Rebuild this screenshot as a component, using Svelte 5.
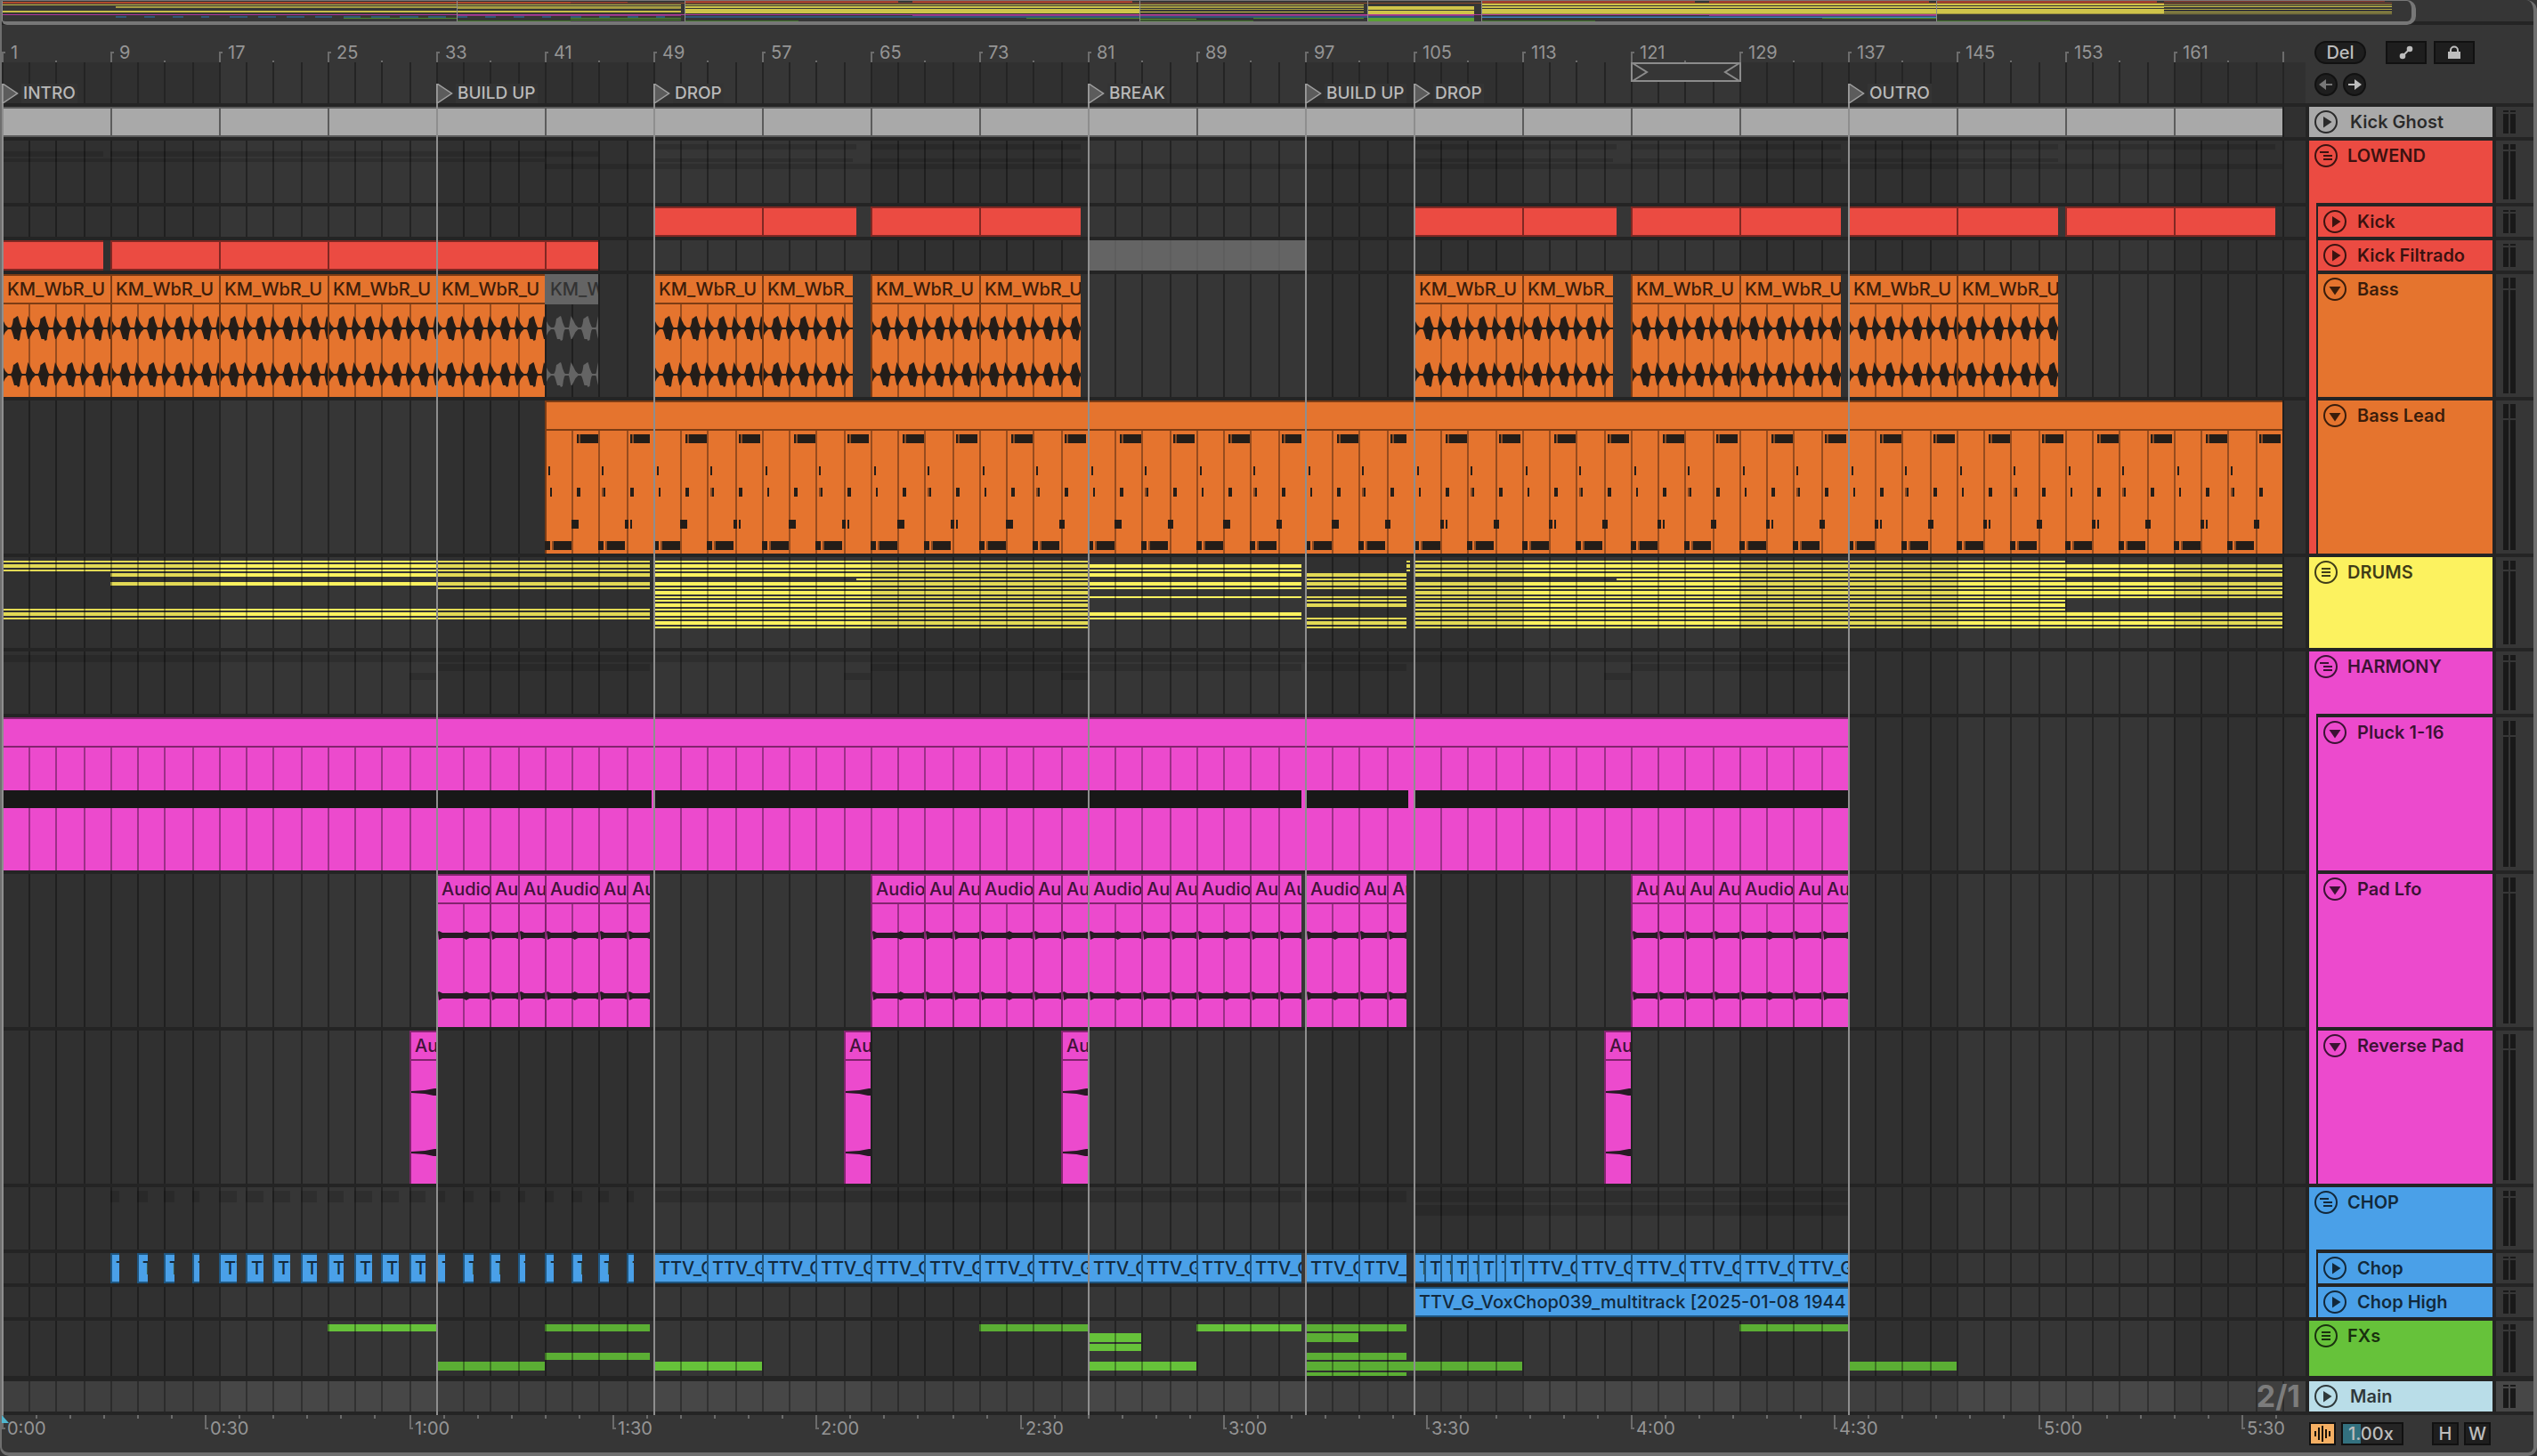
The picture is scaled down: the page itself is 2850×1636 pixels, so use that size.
<script>
  const BAR = 15.25;
  const LANE = 2588;
  const END = 169;

  let laneWidth = $state(LANE);
  let ppb = $derived((laneWidth * BAR) / LANE);

  // Bar position -> pixel, snapped to the two-pixel grid
  const X = (bar) => 2 * Math.floor((0.5 + (bar - 1) * ppb) / 2);
  const T = (sec) => X(1 + sec / 2);

  const range = (from, to, step) => {
    const out = [];
    for (let i = from; i < to; i += step) out.push(i);
    return out;
  };

  const locators = [
    { bar: 1, name: 'INTRO' },
    { bar: 33, name: 'BUILD UP' },
    { bar: 49, name: 'DROP' },
    { bar: 81, name: 'BREAK' },
    { bar: 97, name: 'BUILD UP' },
    { bar: 105, name: 'DROP' },
    { bar: 137, name: 'OUTRO' }
  ];

  const split = (...bars) => bars.slice(0, -1).map((b, i) => [b, bars[i + 1]]);

  const kick = [
    ...split(49, 57, 64), ...split(65, 73, 80.5), ...split(105, 113, 120), ...split(121, 129, 136.5),
    ...split(137, 145, 152.5), ...split(153, 161, 168.5)
  ];
  const filtrado = [[1, 8.5], ...split(9, 17, 25, 33, 41, 45)];
  const bass = [
    ...split(1, 9, 17, 25, 33, 41), ...split(49, 57, 63.75), ...split(65, 73, 80.5),
    ...split(105, 113, 119.75), ...split(121, 129, 136.5), ...split(137, 145, 152.5)
  ];
  const pad = [
    ...split(33, 37, 39, 41, 45, 47, 48.75),
    ...split(65, 69, 71, 73, 77, 79, 81, 85, 87, 89, 93, 95, 96.75),
    ...split(97, 101, 103, 104.5),
    ...split(121, 123, 125, 127, 129, 133, 135, 137)
  ];
  const reverse = [[31, 33], [63, 65], [79, 81], [119, 121]];
  const chopShort = [
    [9, 0.75], [11, 0.75], [13, 0.75], [15, 0.6], [17, 1.3], [19, 1.3], [21, 1.3], [23, 1.2],
    [25, 1.2], [27, 1.3], [29, 1.3], [31, 1.2], [33, 0.75], [35, 0.75], [37, 0.75], [39, 0.6],
    [41, 0.75], [43, 0.75], [45, 0.75], [47, 0.6]
  ].map(([b, l]) => [b, b + l]);
  const chop = [
    ...chopShort,
    ...split(49, 53, 57, 61, 65, 69, 73, 77, 81, 85, 89, 93, 96.75),
    ...split(97, 101, 104.5),
    ...split(105, 105.8, 107, 107.8, 109, 109.75, 111, 111.7, 113, 117, 121, 125, 129, 133, 137)
  ];
  const chopHigh = [[105, 137]];

  const red = '#eb4b42', orange = '#e5742e', yellow = '#fcf25f', pink = '#ec4acd', blue = '#4aa0e8', green = '#66c23a';

  const rows = [
    { id: 'ghost', name: 'Kick Ghost', h: 34, m: 2, kind: 'track', icon: 'play', color: '#a9a9a9' },
    { id: 'lowend', name: 'LOWEND', h: 70, m: 6, kind: 'group', icon: 'open', color: red },
    { id: 'kick', name: 'Kick', h: 34, m: 2, kind: 'child', icon: 'play', color: red, strip: red },
    { id: 'filtrado', name: 'Kick Filtrado', h: 34, m: 2, kind: 'child', icon: 'play', color: red, strip: red },
    { id: 'bass', name: 'Bass', h: 138, m: 12, kind: 'child', icon: 'down', color: orange, strip: red },
    { id: 'lead', name: 'Bass Lead', h: 172, m: 16, kind: 'child', icon: 'down', color: orange, strip: red },
    { id: 'drums', name: 'DRUMS', h: 102, m: 10, kind: 'group', icon: 'closed', color: yellow },
    { id: 'harmony', name: 'HARMONY', h: 70, m: 6, kind: 'group', icon: 'open', color: pink },
    { id: 'pluck', name: 'Pluck 1-16', h: 172, m: 16, kind: 'child', icon: 'down', color: pink, strip: pink },
    { id: 'pad', name: 'Pad Lfo', h: 172, m: 16, kind: 'child', icon: 'down', color: pink, strip: pink },
    { id: 'reverse', name: 'Reverse Pad', h: 172, m: 16, kind: 'child', icon: 'down', color: pink, strip: pink },
    { id: 'chopgroup', name: 'CHOP', h: 70, m: 6, kind: 'group', icon: 'open', color: blue },
    { id: 'chop', name: 'Chop', h: 34, m: 2, kind: 'child', icon: 'play', color: blue, strip: blue },
    { id: 'chophigh', name: 'Chop High', h: 34, m: 2, kind: 'child', icon: 'play', color: blue, strip: blue },
    { id: 'fx', name: 'FXs', h: 62, m: 6, kind: 'group', icon: 'closed', color: green },
    { id: 'main', name: 'Main', h: 34, m: 2, kind: 'main', icon: 'play', color: '#b9dde8' }
  ];

  // [y, height, [from, to] ...]
  const A = [[1, 48.75], [49, 81]];
  const drumStripes = [
    [4, 2, [1, 48.75], [49, 81], [104.5, 104.75], [105, 153]],
    [8, 4, [1, 48.75], [49, 96.75], [104.5, 104.75], [105, 169]],
    [14, 2, [1, 48.75], [49, 96.75], [104.5, 104.75], [105, 169]],
    [18, 4, [9, 48.75], [49, 96.75], [97, 104.5], [105, 169]],
    [24, 2, [64, 81], [97, 104.5], [120, 153]],
    [28, 4, [9, 48.75], [49, 96.75], [97, 104.5], [105, 169]],
    [34, 2, [33, 48.75], [49, 96.75], [97, 104.5], [105, 169]],
    [38, 4, [49, 81], [105, 169]],
    [44, 2, [49, 96.75], [97, 104.5], [105, 169]],
    [48, 2, [49, 81], [97, 104.5], [105, 153]],
    [52, 4, [49, 81], [97, 104.5], [105, 153]],
    [58, 2, ...A, [105, 153]],
    [62, 4, [1, 48.75], [49, 96.75], [105, 169]],
    [68, 2, [1, 48.75], [49, 96.75], [97, 104.5], [105, 169]],
    [72, 4, [49, 81], [97, 104.5], [105, 169]],
    [78, 2, [49, 81], [97, 104.5], [105, 169]]
  ];
  const fxStripes = [
    [4, 8, [25, 33], [41, 48.75], [73, 81], [89, 96.75], [97, 104.5], [129, 137]],
    [14, 10, [81, 85], [97, 101]],
    [26, 8, [81, 85]],
    [36, 8, [41, 48.75], [97, 104.5]],
    [46, 10, [33, 41], [49, 57], [81, 89], [97, 113], [137, 145]],
    [58, 4, [97, 104.5]]
  ];
  const ghostStripes = {
    lowend: [[4, 6, ...kick], [12, 6, ...filtrado], [20, 4, ...bass], [26, 6, [41, 169]]],
    harmony: [[4, 8, [1, 137]], [14, 8, ...pad], [24, 8, ...reverse]],
    chopgroup: [[4, 13, ...chop], [20, 12, ...chopHigh]]
  };

  function shapes(row) {
    const out = [];
    const main = row.id === 'main';
    const px = (x, w, y, h, f) => out.push({ x, w, y, h, f });
    const span = (a, b, y, h, f) => px(X(a), X(b) - X(a), y, h, f);
    const stripes = (list, f) => {
      for (const [y, h, ...segs] of list) for (const [a, b] of segs) span(a, b, y, h, f);
    };
    if (row.id === 'drums') stripes(drumStripes, yellow);
    if (row.id === 'fx') stripes(fxStripes, green);
    for (const b of range(1, 170, 32)) span(b, Math.min(b + 16, 172), 0, row.h, 'rgba(0,0,0,.1)');
    for (const b of range(1, 171, 2)) px(X(b), 2, 0, row.h, main ? 'rgba(0,0,0,.3)' : 'rgba(0,0,0,.34)');
    if (ghostStripes[row.id]) stripes(ghostStripes[row.id], 'rgba(0,0,0,.14)');

    const plain = (clips, f, edge) => {
      for (const [a, b] of clips) {
        span(a, b, 0, row.h, f);
        span(a, b, 0, 2, edge);
        span(a, b, row.h - 2, 2, edge);
        px(X(a), 2, 0, row.h, edge);
      }
    };
    const titled = (clips, f, edge) => {
      for (const [a, b] of clips) {
        span(a, b, 0, row.h, f);
        for (const g of range(Math.ceil(a), b, 1)) if (g % 2) px(X(g), 2, 34, row.h - 34, 'rgba(0,0,0,.34)');
        span(a, b, 0, 2, edge);
        span(a, b, 32, 2, edge);
        px(X(a), 2, 0, row.h, edge);
      }
    };
    const dark = '#241d18', brown = '#8a4a22';
    if (row.id === 'ghost') plain(split(...range(1, 170, 8)), row.color, '#5c5c5c');
    if (row.id === 'kick') plain(kick, red, '#802823');
    if (row.id === 'filtrado') {
      plain(filtrado, red, '#802823');
      span(81, 97, 0, 34, '#646464');
      for (const g of range(83, 97, 2)) px(X(g), 2, 0, 34, 'rgba(0,0,0,.06)');
    }
    if (row.id === 'bass') {
      titled(bass, orange, '#7d3c14');
      span(41, 45, 0, 34, '#646464');
    }
    if (row.id === 'lead') {
      titled([[41, END]], orange, '#7d3c14');
      const limits = [48.75, 96.75, 104.5];
      for (const b of range(41, END, 4)) {
        const second = (b - 41) % 8 === 4;
        const limit = limits.find((l) => b < l && b + 4 > l) ?? b + 4;
        const n = (o, w, y, f = dark) => {
          const s = X(b) + o;
          const e = Math.min(s + w, X(limit));
          if (e > s) px(s, e - s, y, 10, f);
        };
        n(36, 24, 38);
        n(38, 2, 38, brown);
        n(4, 2, 74);
        if (second) n(4, 2, 98, brown);
        n(6, 2, 98);
        n(36, 4, 98);
        const style = b < 73 ? (second ? 's' : 'b') : b < 105 ? (second ? 'm' : 'b') : (second ? 'm' : 's');
        if (style === 'b') n(30, 8, 134);
        if (style === 'm') n(30, 6, 134);
        if (style === 's') {
          n(30, 4, 134);
          n(36, 2, 134);
        }
        n(0, 6, 158);
        n(8, 2, 158, brown);
        n(10, 20, 158);
      }
    }
    if (row.id === 'pluck') {
      titled([[1, 137]], pink, '#83246f');
      for (const [a, b] of [[1, 48.9], [49, 96.75], [97, 104.65], [105, 137]]) span(a, b, 82, 20, '#181818');
    }
    if (row.id === 'pad') titled(pad, pink, '#83246f');
    if (row.id === 'reverse') titled(reverse, pink, '#83246f');
    if (row.id === 'chop') plain(chop, blue, '#1f5680');
    if (row.id === 'chophigh') plain(chopHigh, blue, '#1f5680');
    return out;
  }

  const outline = (x, c, points) => 'M' + points.map(([px, py]) => `${x + px} ${c + py}`).join('L') + 'Z';
  const hit = [[-6, 0], [-5, -3], [-4, -9], [-3, -14], [-2, -12], [0, -8], [2, -4], [5, -1], [7, 0], [5, 1], [2, 4], [0, 8], [-2, 12], [-3, 12], [-4, 8], [-5, 3]];
  const swell = [[7, 0], [9, -2], [10, -5], [11, -11], [13, -12], [14, -13], [16, -14], [17, -11], [18, -7], [20, -2], [22, 0], [20, 2], [19, 6], [18, 13], [16, 14], [15, 12], [12, 12], [10, 5], [9, 2]];

  function bassPath(w, c) {
    let d = '';
    const p = 2 * ppb;
    for (let x = 0; x < w + p; x += p) d += outline(x, c, hit) + outline(x, c, swell);
    return d + `M0 ${c - 1}H${w}V${c + 1}H0Z`;
  }
  function padPath(w, c) {
    let top = `M0 ${c - 4}`;
    let bottom = '';
    const p = 2 * ppb;
    for (let x = 0; x < w; x += p) {
      const e = Math.min(x + p, w);
      top += `L${x + 1} ${c - 5}L${x + 5} ${c - 3}L${(x + e) / 2} ${c - 3}L${e - 3} ${c - 3}L${e} ${c - 4}`;
      bottom = `L${e} ${c + 4}L${e - 3} ${c + 3}L${(x + e) / 2} ${c + 3}L${x + 5} ${c + 3}L${x + 1} ${c + 5}` + bottom;
    }
    return top + bottom + 'Z';
  }
  const reversePath = (w, c) => `M0 ${c - 1}L${w * 0.55} ${c - 2}L${w - 2} ${c - 4}L${w} ${c - 4}V${c + 4}L${w - 3} ${c + 4}L${w * 0.55} ${c + 2}L0 ${c + 1}Z`;

  function waves(row) {
    const make = (clips, fn, centres, f) =>
      clips.map(([a, b]) => {
        const x = X(a) + 2;
        const w = X(b) - x;
        return { x, w, f, d: centres.map((c) => fn(w, c)).join('') };
      });
    if (row.id === 'bass') return [...make(bass, bassPath, [61, 113], '#241d18'), ...make([[41, 45]], bassPath, [61, 113], '#646464')];
    if (row.id === 'pad') return make(pad, padPath, [69, 137], '#271a24');
    if (row.id === 'reverse') return make(reverse, reversePath, [69, 137], '#271a24');
    return [];
  }

  function labels(row) {
    const make = (clips, text, tone) => clips.map(([a, b]) => ({ x: X(a), w: X(b) - X(a), text, tone }));
    if (row.id === 'bass') return [...make(bass, 'KM_WbR_U', 'on-orange'), ...make([[41, 45]], 'KM_WbR', 'muted')];
    if (row.id === 'pad') return make(pad, 'Audio', 'on-pink');
    if (row.id === 'reverse') return make(reverse, 'Audio', 'on-pink');
    if (row.id === 'chop') return make(chop, 'TTV_G', 'on-blue');
    if (row.id === 'chophigh') return make(chopHigh, 'TTV_G_VoxChop039_multitrack [2025-01-08 1944', 'on-blue');
    return [];
  }

  // Miniature of the whole arrangement: [colour, y, height, from, to]
  const ov = [
    ['#777', 0, 1, 1, 169],
    ['#b04a2c', 2, 2, 1, 41], ['#8f3a30', 2, 1, 41, 45], ['#8a4a2a', 3, 1, 41, 169],
    ['#a33f30', 1, 2, 49, 64], ['#a33f30', 1, 2, 65, 80.5], ['#a33f30', 1, 2, 105, 120], ['#a33f30', 1, 2, 121, 136.5],
    ['#a33f30', 1, 2, 137, 152.5], ['#8f3a30', 1, 1, 153, 168.5],
    ['#c9bd48', 5, 1, 1, 48.75], ['#a89e42', 7, 2, 9, 48.75], ['#c9bd48', 12, 2, 1, 48.75], ['#9a9040', 9, 1, 33, 48.75],
    ['#cfc44a', 5, 1, 49, 96.75], ['#cfc44a', 7, 2, 49, 81], ['#cfc44a', 10, 5, 49, 81], ['#a89e42', 7, 2, 81, 96.75],
    ['#a89e42', 10, 1, 81, 96.75], ['#cfc44a', 13, 1, 81, 96.75],
    ['#cfc44a', 7, 4, 97, 104.5], ['#cfc44a', 12, 4, 97, 104.5], ['#cfc44a', 4, 2, 105, 153], ['#cfc44a', 7, 2, 105, 153],
    ['#cfc44a', 10, 5, 105, 153], ['#a89e42', 5, 1, 153, 169], ['#cfc44a', 7, 1, 153, 169], ['#a89e42', 10, 1, 153, 169],
    ['#cfc44a', 13, 1, 153, 169], ['#9a9040', 15, 1, 105, 169],
    ['#b0399a', 16, 1, 1, 137], ['#8f3a80', 17, 1, 33, 48.75], ['#8f3a80', 17, 1, 65, 104.5], ['#8f3a80', 17, 1, 121, 137],
    ...chopShort.map(([a, b]) => ['#2f5778', 18, 2, a, b]),
    ['#2f5778', 18, 2, 49, 104.5], ['#2f5778', 18, 1, 105, 137], ['#3f83bb', 19, 1, 105, 137],
    ['#4a8a2c', 20, 1, 25, 33], ['#4a8a2c', 20, 1, 41, 48.75], ['#4a8a2c', 22, 1, 41, 48.75], ['#3f7428', 23, 1, 33, 41],
    ['#3f7428', 23, 1, 49, 57], ['#4a8a2c', 20, 1, 73, 81], ['#5aa035', 21, 1, 81, 85], ['#3f7428', 23, 1, 81, 89],
    ['#4a8a2c', 20, 1, 89, 96.75], ['#5aa035', 20, 4, 97, 104.5], ['#3f7428', 23, 1, 105, 113],
    ['#4a8a2c', 20, 1, 129, 137], ['#3f7428', 23, 1, 137, 145]
  ];
  // The overview fits slightly more than the song's length in the window
  let ox = $derived((ppb * 15.98) / BAR);
</script>

{#snippet foldIcon(kind)}
  <svg class="fold" viewBox="0 0 26 26" width="26" height="26" aria-hidden="true">
    <circle cx="13" cy="13" r="12" fill="none" stroke="currentColor" stroke-width="2" />
    {#if kind === 'play'}
      <path d="M10 7L19.500 13L10 19.500Z" fill="currentColor" />
    {:else if kind === 'down'}
      <path d="M6.500 10H19.500L13 19.500Z" fill="currentColor" />
    {:else if kind === 'open'}
      <path d="M6 9H16M10 13H20M10 17H20" stroke="currentColor" stroke-width="2" />
    {:else}
      <path d="M8 9H18M8 13H18M8 17H18" stroke="currentColor" stroke-width="2" />
    {/if}
  </svg>
{/snippet}

<div class="app">
  <div class="overview">
    <svg class="fill" height="24" shape-rendering="crispEdges" aria-hidden="true">
      {#each ov as [f, y, h, a, b]}
        <rect x={(a - 1) * ox} {y} width={(b - a) * ox} height={h} fill={f} />
      {/each}
      {#each locators as l}
        <rect x={(l.bar - 1) * ox} y="0" width="1" height="24" fill="#8c8c8c" />
      {/each}
    </svg>
    <div class="viewport" style:width="{169.7 * ox}px"></div>
  </div>

  <div class="arrangement">
    <header class="head">
      <div class="ruler" bind:clientWidth={laneWidth}>
        <svg class="fill" height="88" shape-rendering="crispEdges" aria-hidden="true">
          {#each range(1, 170, 32) as b}
            <rect x={X(b)} y="42" width={X(Math.min(b + 16, 172)) - X(b)} height="46" fill="rgba(0,0,0,.1)" />
          {/each}
          {#each range(1, 171, 2) as b}
            <rect x={X(b)} y="42" width="2" height="46" fill="#242424" />
          {/each}
          {#each range(1, 170, 4) as b}
            {#if b % 8 === 1}
              <rect x={X(b)} y="30" width="2" height="12" fill="#6c6c6c" />
              {#if b < END}<rect x={X(b) + 2} y="30" width="2" height="2" fill="#6c6c6c" />{/if}
            {:else}
              <rect x={X(b)} y="40" width="2" height="2" fill="#6c6c6c" />
            {/if}
          {/each}
          <rect x={X(121) + 1} y="43" width={X(129) - X(121)} height="20" fill="#363636" stroke="#8c8c8c" stroke-width="2" />
          <g fill="none" stroke="#8c8c8c" stroke-width="2" shape-rendering="auto">
            <path d="M{X(121) + 2} 43L{X(121) + 18} 53L{X(121) + 2} 63" />
            <path d="M{X(129)} 43L{X(129) - 16} 53L{X(129)} 63" />
          </g>
        </svg>
        {#each range(1, END, 8) as b}
          <span class="bar-number" style:left="{X(b) + 10}px">{b}</span>
        {/each}
        {#each locators as l}
          <button class="locator" style:left="{X(l.bar)}px">
            <svg width="19" height="22" viewBox="0 0 19 22" aria-hidden="true">
              <path d="M1 0L17.500 11L1 22Z" fill="#5c5c5c" stroke="#a0a0a0" stroke-width="1.500" />
            </svg>
            <span>{l.name}</span>
          </button>
        {/each}
      </div>
      <div class="controls">
        <div class="control-row">
          <button class="pill">Del</button>
          <div class="toggles">
            <button class="box wide" aria-label="Automation mode">
              <svg width="16" height="16" viewBox="0 0 16 16" aria-hidden="true">
                <path d="M4 12L12 4" stroke="#bdbdbd" stroke-width="2" />
                <circle cx="4" cy="12" r="3.300" fill="#bdbdbd" /><circle cx="12" cy="4" r="3.300" fill="#bdbdbd" />
              </svg>
            </button>
            <button class="box wide" aria-label="Lock envelopes">
              <svg width="16" height="16" viewBox="0 0 16 16" aria-hidden="true">
                <path d="M4 8V5.500a4 4 0 0 1 8 0V8" fill="none" stroke="#bdbdbd" stroke-width="2" />
                <rect x="1" y="7" width="14" height="8" fill="#bdbdbd" />
              </svg>
            </button>
          </div>
        </div>
        <div class="arrows">
          <button class="round dim" aria-label="Previous locator">
            <svg width="16" height="14" viewBox="0 0 16 14" aria-hidden="true"><path d="M0 7L8 1V6H15V8H8V13Z" fill="currentColor" /></svg>
          </button>
          <button class="round" aria-label="Next locator">
            <svg width="16" height="14" viewBox="0 0 16 14" aria-hidden="true"><path d="M16 7L8 1V6H1V8H8V13Z" fill="currentColor" /></svg>
          </button>
        </div>
      </div>
    </header>

    <main class="tracks">
      {#each rows as row (row.id)}
        <section class="row {row.kind}" style:height="{row.h}px" aria-label={row.name}>
          <div class="lane">
            <svg class="fill" height={row.h} shape-rendering="crispEdges" aria-hidden="true">
              {#each shapes(row) as s}
                <rect x={s.x} y={s.y} width={s.w} height={s.h} fill={s.f} />
              {/each}
              {#each waves(row) as w}
                <svg x={w.x} y="0" width={w.w} height={row.h}>
                  <path d={w.d} fill={w.f} shape-rendering="geometricPrecision" />
                </svg>
              {/each}
            </svg>
            {#each labels(row) as l}
              <span class="clip-name {l.tone}" style:left="{l.x}px" style:width="{l.w}px">{l.text}</span>
            {/each}
            {#if row.kind === 'main'}<span class="grid-size">2/1</span>{/if}
          </div>
          {#if row.strip}<div class="strip" style:background={row.strip}></div>{/if}
          <div class="header" style:background={row.color}>
            <button class="fold-button" aria-label="Toggle {row.name}">{@render foldIcon(row.icon)}</button>
            <span class="name">{row.name}</span>
          </div>
          <div class="meter">
            {#each [0, 1] as c (c)}
              <div class="channel">
                <i style:height="{row.m}px"></i>
                <b></b>
              </div>
            {/each}
          </div>
        </section>
      {/each}
    </main>

    <svg class="locator-lines" shape-rendering="crispEdges" aria-hidden="true">
      {#each locators as l}
        <rect x={X(l.bar)} y="0" width="2" height="100%" fill="#8e8e8e" />
      {/each}
    </svg>
  </div>

  <footer class="foot">
    <div class="times">
      <svg class="fill" height="42" shape-rendering="crispEdges" aria-hidden="true">
        {#each range(0, 340, 5) as s}
          {#if s % 30 === 0}
            <path d="M{T(s)} 0h2v14h2v2h-4z" fill="#6c6c6c" />
          {:else}
            <rect x={T(s)} y="0" width="2" height="4" fill="#6c6c6c" />
          {/if}
        {/each}
        <path d="M0 0L8 9H0Z" fill="#4fb6cf" shape-rendering="auto" />
      </svg>
      {#each range(0, 340, 30) as s}
        <span class="time" style:left="{T(s) + 6}px">{Math.floor(s / 60)}:{s % 60 ? '30' : '00'}</span>
      {/each}
    </div>
    <div class="foot-controls">
      <button class="box follow" aria-label="Waveform zoom">
        <svg width="20" height="18" viewBox="0 0 20 18" aria-hidden="true">
          <path d="M2 6V12M6 2V16M10 0V18M14 4V14M18 6V12" stroke="#1a1208" stroke-width="2" />
        </svg>
      </button>
      <input class="speed" aria-label="Waveform scale" value="1.00x" />
      <div class="hw">
        <button class="box">H</button>
        <button class="box">W</button>
      </div>
    </div>
  </footer>
</div>

<style>
  :global(body) {
    background: #363636;
  }
  .app {
    box-sizing: border-box;
    width: 100%;
    overflow: hidden;
    border: 0 solid #6f6f6f;
    border-width: 0 4px 4px 2px;
    border-radius: 0 12px 10px 10px;
    background: #363636;
    color: #9a9a9a;
    font-family: Inter, 'Liberation Sans', sans-serif;
    font-size: 20px;
    line-height: 24px;
  }
  button,
  input {
    box-sizing: border-box;
    margin: 0;
    padding: 0;
    border: 0;
    background: none;
    color: inherit;
    font: inherit;
  }
  .fill {
    display: block;
    width: 100%;
  }
  .overview {
    position: relative;
    height: 24px;
    border-bottom: 4px solid #242424;
  }
  .viewport {
    position: absolute;
    top: 0;
    left: 0;
    box-sizing: border-box;
    height: 28px;
    border: 0 solid #777;
    border-width: 1px 5px 4px 0;
    border-radius: 0 10px 10px 6px;
  }
  .arrangement {
    position: relative;
  }
  .head {
    display: flex;
    height: 88px;
  }
  .ruler {
    position: relative;
    flex: 1;
    min-width: 0;
    overflow: hidden;
  }
  .bar-number {
    position: absolute;
    top: 19px;
    color: #959595;
  }
  .locator {
    position: absolute;
    top: 66px;
    z-index: 2;
    display: flex;
    gap: 3px;
    height: 22px;
    color: #b9b9b9;
    font-size: 19px;
    font-weight: 500;
    line-height: 22px;
    white-space: nowrap;
  }
  .locator span {
    padding: 0 2px;
    background: #343434;
  }
  .controls {
    display: flex;
    flex: 0 0 256px;
    flex-direction: column;
    gap: 10px;
    box-sizing: border-box;
    padding: 18px 0 0 10px;
    color: #bdbdbd;
  }
  .control-row {
    display: flex;
    gap: 22px;
  }
  .toggles {
    display: flex;
    gap: 8px;
  }
  .arrows {
    display: flex;
    gap: 6px;
  }
  .pill,
  .round,
  .box {
    display: flex;
    align-items: center;
    justify-content: center;
    height: 26px;
    border: 2px solid #111;
    background: #1e1e1e;
    font-weight: 500;
    line-height: 22px;
  }
  .pill {
    width: 58px;
    border-radius: 13px;
  }
  .round {
    width: 26px;
    border-radius: 13px;
  }
  .dim {
    color: #777;
  }
  .box {
    width: 30px;
  }
  .wide {
    width: 46px;
  }
  .tracks {
    display: flex;
    flex-direction: column;
    gap: 4px;
    padding: 4px 0;
    background: #242424;
  }
  .row {
    display: flex;
  }
  .row.main {
    margin-top: 2px;
  }
  .lane {
    position: relative;
    flex: 1;
    min-width: 0;
    overflow: hidden;
    background: #363636;
  }
  .main .lane,
  .main .meter {
    background: #474747;
  }
  .strip {
    flex: 0 0 8px;
    margin: -4px 2px 0 4px;
  }
  .header {
    display: flex;
    flex: 0 0 206px;
    gap: 14px;
    align-items: flex-start;
    box-sizing: border-box;
    margin-left: 4px;
    padding: 4px 0 0 6px;
    color: rgba(0, 0, 0, 0.75);
    font-weight: 600;
    line-height: 26px;
    white-space: nowrap;
  }
  .group .header {
    gap: 11px;
  }
  .child .header {
    flex-basis: 196px;
    gap: 12px;
    margin-left: 0;
  }
  .fold-button,
  .fold {
    display: block;
    width: 26px;
    height: 26px;
  }
  .meter {
    display: flex;
    flex: 0 0 42px;
    gap: 2px;
    box-sizing: border-box;
    margin-left: 4px;
    padding: 4px 0 4px 8px;
    background: #363636;
  }
  .channel {
    display: flex;
    flex: 0 0 6px;
    flex-direction: column;
    gap: 2px;
  }
  .channel i,
  .channel b {
    display: block;
    background: #191919;
  }
  .channel b {
    flex: 1;
  }
  .clip-name {
    position: absolute;
    top: 0;
    box-sizing: border-box;
    overflow: hidden;
    padding-left: 6px;
    font-weight: 500;
    line-height: 34px;
    white-space: nowrap;
  }
  .on-orange {
    color: #3c1d0a;
  }
  .on-pink {
    color: #42133a;
  }
  .on-blue {
    color: #12293d;
  }
  .muted {
    color: #333;
  }
  .grid-size {
    position: absolute;
    top: 0;
    right: 6px;
    color: #7c7c7c;
    font-size: 34px;
    font-weight: 700;
    line-height: 34px;
  }
  .locator-lines {
    position: absolute;
    top: 66px;
    left: 0;
    width: calc(100% - 256px);
    height: calc(100% - 66px);
    pointer-events: none;
  }
  .foot {
    display: flex;
    height: 42px;
  }
  .times {
    position: relative;
    flex: 1;
    min-width: 0;
    overflow: hidden;
  }
  .time {
    position: absolute;
    top: 3px;
    color: #959595;
  }
  .foot-controls {
    display: flex;
    flex: 0 0 256px;
    gap: 6px;
    align-items: flex-start;
    box-sizing: border-box;
    padding: 8px 0 0 4px;
    color: #bdbdbd;
  }
  .follow {
    background: #f4af63;
  }
  .speed {
    width: 70px;
    height: 26px;
    padding-left: 6px;
    border: 2px solid #111;
    background: linear-gradient(90deg, #33717f 20px, #242424 20px);
    font-weight: 500;
    line-height: 22px;
  }
  .hw {
    display: flex;
    gap: 6px;
    margin-left: 26px;
  }
</style>
